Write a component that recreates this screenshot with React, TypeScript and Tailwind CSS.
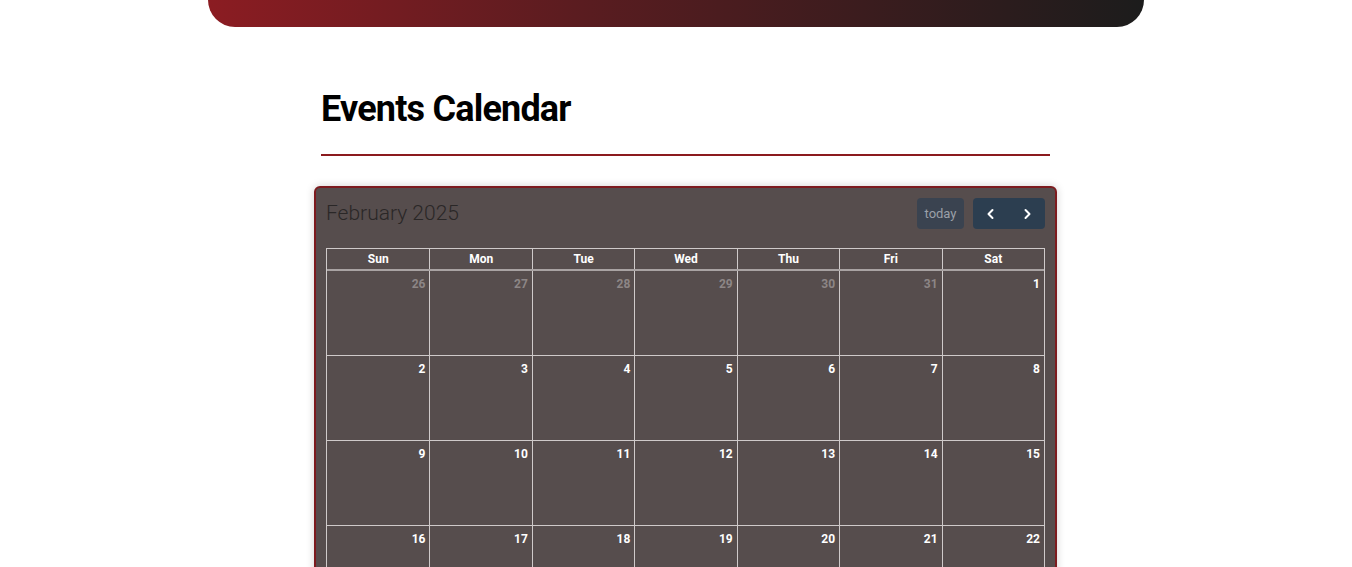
import React from 'react'

const days = ['Sun', 'Mon', 'Tue', 'Wed', 'Thu', 'Fri', 'Sat']

type Cell = { n: number; other: boolean }

function buildWeeks(): Cell[][] {
  const cells: Cell[] = []
  for (let d = 26; d <= 31; d++) cells.push({ n: d, other: true })
  for (let d = 1; d <= 28; d++) cells.push({ n: d, other: false })
  cells.push({ n: 1, other: true })
  const weeks: Cell[][] = []
  for (let i = 0; i < cells.length; i += 7) weeks.push(cells.slice(i, i + 7))
  return weeks
}

function ChevronLeft() {
  return (
    <svg width="14" height="14" viewBox="0 0 14 14" fill="none">
      <path d="M8.5 3 L4.5 7 L8.5 11" stroke="white" strokeWidth="2" strokeLinecap="round" strokeLinejoin="round" />
    </svg>
  )
}

function ChevronRight() {
  return (
    <svg width="14" height="14" viewBox="0 0 14 14" fill="none">
      <path d="M5.5 3 L9.5 7 L5.5 11" stroke="white" strokeWidth="2" strokeLinecap="round" strokeLinejoin="round" />
    </svg>
  )
}

export default function App() {
  const weeks = buildWeeks()

  return (
    <div className="min-h-screen bg-white font-['Roboto',sans-serif]">
      {/* top banner */}
      <div className="ml-[208px] h-[27px] w-[936px] rounded-b-[28px] bg-[linear-gradient(90deg,#8b1c22_0%,#5a1c20_40%,#1c1c1c_100%)]" />

      <div className="ml-[321px] w-[729px] pt-[58px]">
        <h1 className="text-[36px] font-bold leading-[48px] tracking-[-0.8px] text-black">Events Calendar</h1>
        <div className="mt-[21px] h-[2px] w-full bg-[#8b1a1e]" />

        {/* calendar card */}
        <div className="-mx-[7px] mt-[30px] rounded-[6px] border-2 border-[#7d1b1f] bg-[#564d4d] px-[10px] pb-[12px] pt-[10px] shadow-[0_0_8px_rgba(0,0,0,0.18)]">
          <div className="flex h-[31px] items-center justify-between">
            <h2 className="text-[21px] font-light leading-[31px] text-[#2a2727]">February 2025</h2>
            <div className="flex gap-[9px]">
              <button className="h-[31px] w-[47px] rounded-[4px] bg-[#3a4350] text-[13px] text-[#9aa0a8]">today</button>
              <div className="flex h-[31px] overflow-hidden rounded-[4px] bg-[#2c3e50]">
                <button className="flex w-[36px] items-center justify-center">
                  <ChevronLeft />
                </button>
                <button className="flex w-[36px] items-center justify-center">
                  <ChevronRight />
                </button>
              </div>
            </div>
          </div>

          <div className="mt-[19px] border border-[#cfcaca]">
            <div className="grid grid-cols-7 border-b-2 border-[#a9a3a3]">
              {days.map((d, i) => (
                <div
                  key={d}
                  className={`h-[20px] text-center text-[12px] font-bold leading-[20px] text-white ${i > 0 ? 'border-l border-[#cfcaca]' : ''}`}
                >
                  {d}
                </div>
              ))}
            </div>
            {weeks.map((w, wi) => (
              <div key={wi} className={`grid grid-cols-7 ${wi > 0 ? 'border-t border-[#cfcaca]' : ''}`}>
                {w.map((c, ci) => (
                  <div
                    key={ci}
                    className={`h-[84px] pr-[4px] pt-[4px] text-right text-[12px] font-bold leading-[18px] ${ci > 0 ? 'border-l border-[#cfcaca]' : ''} ${c.other ? 'text-[#8d8686]' : 'text-white'}`}
                  >
                    {c.n}
                  </div>
                ))}
              </div>
            ))}
          </div>
        </div>
      </div>
    </div>
  )
}
